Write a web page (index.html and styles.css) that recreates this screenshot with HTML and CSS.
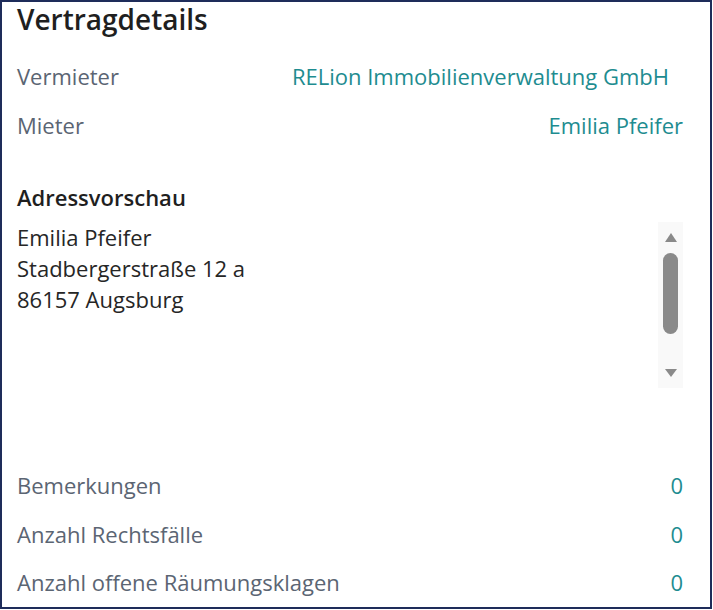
FILE: index.html
```html
<!DOCTYPE html>
<html lang="de">
<head>
<meta charset="utf-8">
<title>Vertragdetails</title>
<link rel="stylesheet" href="styles.css">
</head>
<body>
<div class="card">
  <h1 class="title">Vertragdetails</h1>
  <div class="row"><span class="label">Vermieter</span><span class="value value-wide">RELion Immobilienverwaltung GmbH</span></div>
  <div class="row"><span class="label">Mieter</span><span class="value">Emilia Pfeifer</span></div>
  <h2 class="subtitle">Adressvorschau</h2>
  <div class="address">
    <div class="address-text">
      <div>Emilia Pfeifer</div>
      <div>Stadbergerstraße 12 a</div>
      <div>86157 Augsburg</div>
    </div>
    <div class="scrollbar">
      <div class="arrow-up"></div>
      <div class="thumb"></div>
      <div class="track"></div>
      <div class="arrow-down"></div>
    </div>
  </div>
  <div class="stats">
    <div class="row row-stat"><span class="label">Bemerkungen</span><span class="value">0</span></div>
    <div class="row row-stat"><span class="label">Anzahl Rechtsfälle</span><span class="value">0</span></div>
    <div class="row row-stat"><span class="label">Anzahl offene Räumungsklagen</span><span class="value">0</span></div>
  </div>
</div>
</body>
</html>
```
FILE: styles.css
```css
html, body {
  margin: 0;
  padding: 0;
  background: #ffffff;
}
body {
  font-family: "Open Sans", "Noto Sans", sans-serif;
}
.card {
  box-sizing: border-box;
  width: 712px;
  height: 609px;
  border: 2px solid #1e2c5a;
  padding: 0 27px 0 15px;
  box-shadow: 0 1px 0 #c9d3e6;
}
.title {
  margin: 0 0 16px 0;
  font-size: 28px;
  line-height: 34px;
  font-weight: 600;
  color: #1f1f1f;
}
.row {
  display: flex;
  justify-content: space-between;
  align-items: baseline;
  height: 49px;
  line-height: 49px;
  font-size: 22px;
}
.label {
  color: #5b6573;
}
.value {
  color: #1e8c90;
}
.value-wide {
  padding-right: 14px;
}
.subtitle {
  margin: 32px 0 9px 0;
  font-size: 22px;
  line-height: 31px;
  font-weight: 600;
  color: #1f1f1f;
}
.address {
  display: flex;
  height: 166px;
}
.address-text {
  flex: 1;
  font-size: 22px;
  line-height: 31px;
  color: #262626;
}
.scrollbar {
  width: 25px;
  background: #f9f9f9;
  display: flex;
  flex-direction: column;
  align-items: center;
}
.arrow-up {
  margin-top: 11px;
  width: 0;
  height: 0;
  border-left: 6px solid transparent;
  border-right: 6px solid transparent;
  border-bottom: 9px solid #8a8a8a;
}
.thumb {
  margin-top: 11px;
  width: 15px;
  height: 81px;
  border-radius: 8px;
  background: #8a8a8a;
}
.track {
  flex: 1;
}
.arrow-down {
  margin-bottom: 11px;
  width: 0;
  height: 0;
  border-left: 6px solid transparent;
  border-right: 6px solid transparent;
  border-top: 8px solid #8a8a8a;
}
.stats {
  margin-top: 73px;
}
.row-stat {
  height: 48.5px;
  line-height: 48.5px;
}
```
